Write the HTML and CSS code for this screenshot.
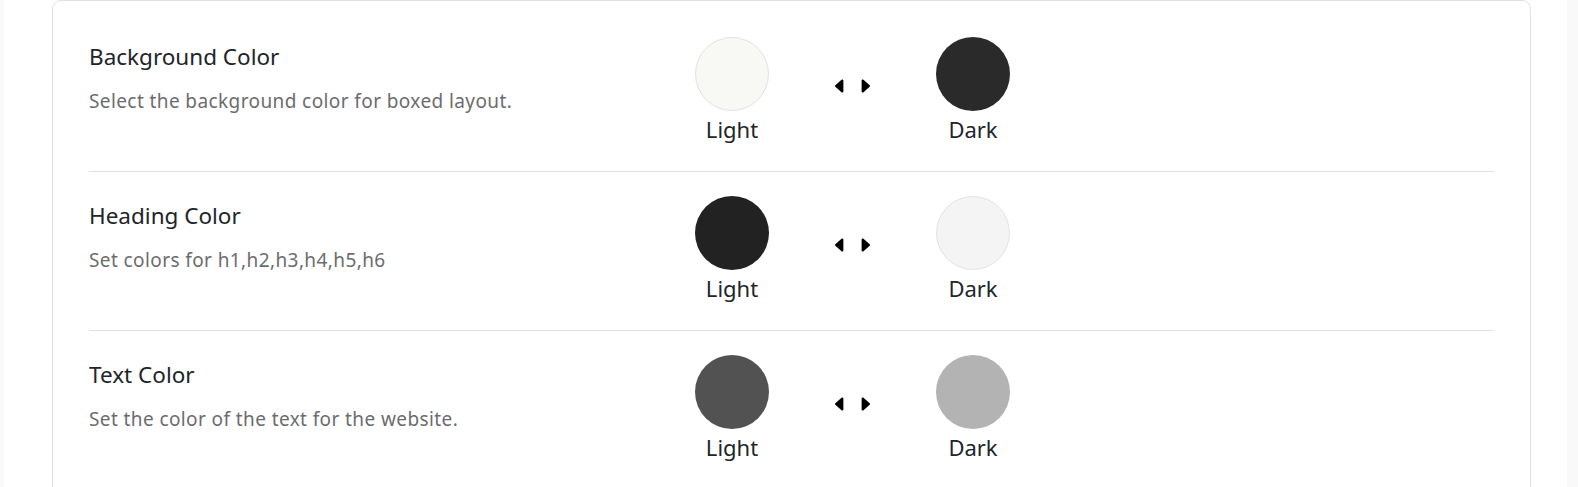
FILE: index.html
```html
<!DOCTYPE html>
<html lang="en">
<head>
<meta charset="utf-8">
<title>Color Settings</title>
<link rel="stylesheet" href="styles.css">
</head>
<body>
<div class="page">
  <section class="card">
    <div class="setting">
      <div class="setting-info">
        <h3 class="setting-title">Background Color</h3>
        <p class="setting-desc">Select the background color for boxed layout.</p>
      </div>
      <div class="swatches">
        <div class="swatch">
          <span class="dot dot-outline" style="background:#f8f8f4"></span>
          <span class="swatch-label">Light</span>
        </div>
        <div class="toggle">
          <svg viewBox="0 0 16 16" class="caret"><path d="m3.86 8.753 5.482 4.796c.646.566 1.658.106 1.658-.753V3.204a1 1 0 0 0-1.659-.753l-5.48 4.796a1 1 0 0 0 0 1.506z"/></svg>
          <svg viewBox="0 0 16 16" class="caret"><path d="m12.14 8.753-5.482 4.796c-.646.566-1.658.106-1.658-.753V3.204a1 1 0 0 1 1.659-.753l5.48 4.796a1 1 0 0 1 0 1.506z"/></svg>
        </div>
        <div class="swatch">
          <span class="dot" style="background:#2a2a2a"></span>
          <span class="swatch-label">Dark</span>
        </div>
      </div>
    </div>

    <div class="setting">
      <div class="setting-info">
        <h3 class="setting-title">Heading Color</h3>
        <p class="setting-desc">Set colors for h1,h2,h3,h4,h5,h6</p>
      </div>
      <div class="swatches">
        <div class="swatch">
          <span class="dot" style="background:#222222"></span>
          <span class="swatch-label">Light</span>
        </div>
        <div class="toggle">
          <svg viewBox="0 0 16 16" class="caret"><path d="m3.86 8.753 5.482 4.796c.646.566 1.658.106 1.658-.753V3.204a1 1 0 0 0-1.659-.753l-5.48 4.796a1 1 0 0 0 0 1.506z"/></svg>
          <svg viewBox="0 0 16 16" class="caret"><path d="m12.14 8.753-5.482 4.796c-.646.566-1.658.106-1.658-.753V3.204a1 1 0 0 1 1.659-.753l5.48 4.796a1 1 0 0 1 0 1.506z"/></svg>
        </div>
        <div class="swatch">
          <span class="dot dot-outline" style="background:#f4f4f4"></span>
          <span class="swatch-label">Dark</span>
        </div>
      </div>
    </div>

    <div class="setting">
      <div class="setting-info">
        <h3 class="setting-title">Text Color</h3>
        <p class="setting-desc">Set the color of the text for the website.</p>
      </div>
      <div class="swatches">
        <div class="swatch">
          <span class="dot" style="background:#525252"></span>
          <span class="swatch-label">Light</span>
        </div>
        <div class="toggle">
          <svg viewBox="0 0 16 16" class="caret"><path d="m3.86 8.753 5.482 4.796c.646.566 1.658.106 1.658-.753V3.204a1 1 0 0 0-1.659-.753l-5.48 4.796a1 1 0 0 0 0 1.506z"/></svg>
          <svg viewBox="0 0 16 16" class="caret"><path d="m12.14 8.753-5.482 4.796c-.646.566-1.658.106-1.658-.753V3.204a1 1 0 0 1 1.659-.753l5.48 4.796a1 1 0 0 1 0 1.506z"/></svg>
        </div>
        <div class="swatch">
          <span class="dot" style="background:#b3b3b3"></span>
          <span class="swatch-label">Dark</span>
        </div>
      </div>
    </div>
  </section>
</div>
</body>
</html>
```

FILE: styles.css
```css
* {
  box-sizing: border-box;
}

html, body {
  margin: 0;
  padding: 0;
}

body {
  background: #f9f9fa;
  font-family: "Noto Sans", "Open Sans", sans-serif;
  color: #212529;
  overflow: hidden;
  height: 487px;
}

.page {
  margin: 0 11px 0 4px;
  background: #ffffff;
  min-height: 487px;
  padding: 0 36px 0 48px;
}

.card {
  border: 1px solid #dfe1e5;
  border-radius: 9px;
  background: #ffffff;
  padding: 12px 36px 0 36px;
  min-height: 600px;
}

.setting {
  display: grid;
  grid-template-columns: 593px auto;
  align-items: start;
  padding: 24px 0 26px;
  border-bottom: 1px solid #dee2e6;
}

.setting-info {
  padding-top: 6px;
}

.setting-title {
  margin: 0;
  font-size: 22.5px;
  font-weight: 400;
  line-height: 27px;
  color: #212529;
}

.setting-desc {
  margin: 18px 0 0;
  font-size: 19px;
  letter-spacing: 0.4px;
  line-height: 27px;
  color: #6c6c6e;
}

.swatches {
  display: flex;
  align-items: center;
}

.swatch {
  width: 100px;
  display: flex;
  flex-direction: column;
  align-items: center;
}

.dot {
  display: block;
  width: 74px;
  height: 74px;
  border-radius: 50%;
}

.dot-outline {
  border: 1px solid #e3e3e6;
}

.swatch-label {
  margin-top: 2px;
  font-size: 22px;
  line-height: 32px;
  color: #212529;
}

.toggle {
  width: 141px;
  display: flex;
  justify-content: center;
  gap: 7px;
  margin-bottom: 10px;
}

.caret {
  width: 18px;
  height: 18px;
  fill: #000000;
}
```
